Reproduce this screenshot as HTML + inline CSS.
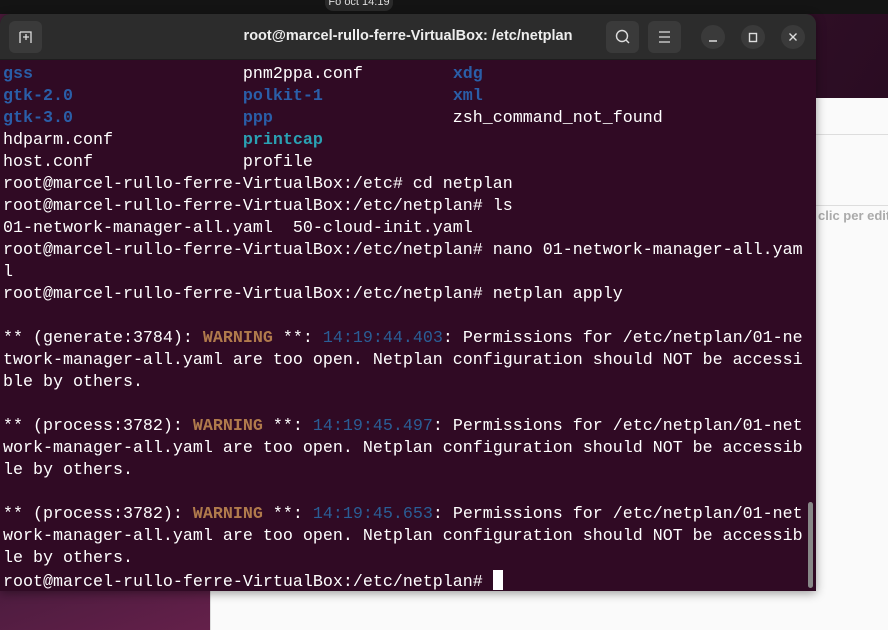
<!DOCTYPE html>
<html><head><meta charset="utf-8"><style>
*{margin:0;padding:0;box-sizing:border-box}
body{width:888px;height:630px;overflow:hidden;position:relative;background:#fafafa;font-family:"Liberation Sans",sans-serif}
.top{position:absolute;left:0;top:0;width:888px;height:14px;background:#141414}
.tip{position:absolute;left:325px;top:-10px;width:68px;height:21px;border-radius:8px;background:#2a2a2a;color:#ddd;font-size:11px;text-align:center;line-height:24px}
.purp{position:absolute;left:0;top:14px;width:888px;height:84px;background:linear-gradient(120deg,#4a1a3a,#2a0c22)}
.botl{position:absolute;left:0;top:590px;width:210px;height:40px;background:linear-gradient(160deg,#4d1c3f,#64204a)}
.wr{position:absolute;left:210px;top:590px;width:678px;height:40px;background:#fafafa;border-left:1px solid #ddd}
.rp{position:absolute;left:816px;top:98px;width:72px;height:492px;background:#fafafa}
.l1{position:absolute;left:816px;top:134px;width:72px;height:1px;background:#ddd}
.l2{position:absolute;left:816px;top:205px;width:72px;height:1px;background:#ddd}
.ct{position:absolute;left:818px;top:208px;color:#aaa;font-size:13px;font-weight:bold;white-space:nowrap}
.win{position:absolute;left:0;top:14px;width:816px;height:577px;background:#300a24;border-radius:10px 10px 0 0;overflow:hidden;box-shadow:0 2px 10px rgba(0,0,0,.4)}
.hd{height:46px;background:#2c2c2c;position:relative;border-bottom:1px solid #1e1e1e}
.title{position:absolute;left:0;right:0;top:14px;text-align:center;color:#eee;font-size:14.5px;font-weight:bold}
.bt{position:absolute;top:7px;width:33px;height:32px;border-radius:6px;background:#3a3a3a}
.cb{position:absolute;top:11px;width:24px;height:24px;border-radius:12px;background:#3a3a3a}
pre{font-family:"Liberation Mono",monospace;font-size:16.67px;line-height:22px;color:#fff;padding:4px 0 0 3px;white-space:pre}
.b{color:#2a5ea8;font-weight:bold}
.c{color:#2aa1b3;font-weight:bold}
.w{color:#b07a4c;font-weight:bold}
.t{color:#2a5e96}
.sb{position:absolute;left:808px;top:488px;width:5px;height:86px;border-radius:3px;background:#888}
.cur{display:inline-block;width:10px;height:20px;background:#fff;vertical-align:-4px}
</style></head><body>
<div class="top"><div class="tip">Fo oct 14:19</div></div>
<div class="purp"></div>
<div class="rp"></div><div class="l1"></div><div class="l2"></div><div class="ct">clic per edit</div>
<div class="botl"></div><div class="wr"></div>
<div class="win">
<div class="hd">
<div class="bt" style="left:9px"><svg width="33" height="32" viewBox="0 0 33 32"><path d="M11 11h11v11M11 11v11M14 16h6M17 13v6" stroke="#ddd" stroke-width="1.3" fill="none"/></svg></div>
<div class="title">root@marcel-rullo-ferre-VirtualBox: /etc/netplan</div>
<div class="bt" style="left:606px"><svg width="33" height="32"><circle cx="16" cy="15" r="5.5" stroke="#ddd" stroke-width="1.4" fill="none"/><path d="M20 19l3 3" stroke="#ddd" stroke-width="1.4"/></svg></div>
<div class="bt" style="left:648px"><svg width="33" height="32"><path d="M11 11h11M11 16h11M11 21h11" stroke="#ddd" stroke-width="1.3"/></svg></div>
<div class="cb" style="left:701px"><svg width="24" height="24"><path d="M8 16h8" stroke="#ddd" stroke-width="1.4"/></svg></div>
<div class="cb" style="left:741px"><svg width="24" height="24"><rect x="8.5" y="8.5" width="7" height="8" stroke="#ddd" stroke-width="1.4" fill="none"/></svg></div>
<div class="cb" style="left:781px"><svg width="24" height="24"><path d="M8.5 8.5l7 7M15.5 8.5l-7 7" stroke="#ddd" stroke-width="1.4"/></svg></div>
</div>
<pre><span class="b">gss</span>                     pnm2ppa.conf         <span class="b">xdg</span>
<span class="b">gtk-2.0</span>                 <span class="b">polkit-1</span>             <span class="b">xml</span>
<span class="b">gtk-3.0</span>                 <span class="b">ppp</span>                  zsh_command_not_found
hdparm.conf             <span class="c">printcap</span>
host.conf               profile
root@marcel-rullo-ferre-VirtualBox:/etc# cd netplan
root@marcel-rullo-ferre-VirtualBox:/etc/netplan# ls
01-network-manager-all.yaml  50-cloud-init.yaml
root@marcel-rullo-ferre-VirtualBox:/etc/netplan# nano 01-network-manager-all.yam
l
root@marcel-rullo-ferre-VirtualBox:/etc/netplan# netplan apply

** (generate:3784): <span class="w">WARNING</span> **: <span class="t">14:19:44.403</span>: Permissions for /etc/netplan/01-ne
twork-manager-all.yaml are too open. Netplan configuration should NOT be accessi
ble by others.

** (process:3782): <span class="w">WARNING</span> **: <span class="t">14:19:45.497</span>: Permissions for /etc/netplan/01-net
work-manager-all.yaml are too open. Netplan configuration should NOT be accessib
le by others.

** (process:3782): <span class="w">WARNING</span> **: <span class="t">14:19:45.653</span>: Permissions for /etc/netplan/01-net
work-manager-all.yaml are too open. Netplan configuration should NOT be accessib
le by others.
root@marcel-rullo-ferre-VirtualBox:/etc/netplan# <span class="cur"></span></pre>
<div class="sb"></div>
</div>
</body></html>
